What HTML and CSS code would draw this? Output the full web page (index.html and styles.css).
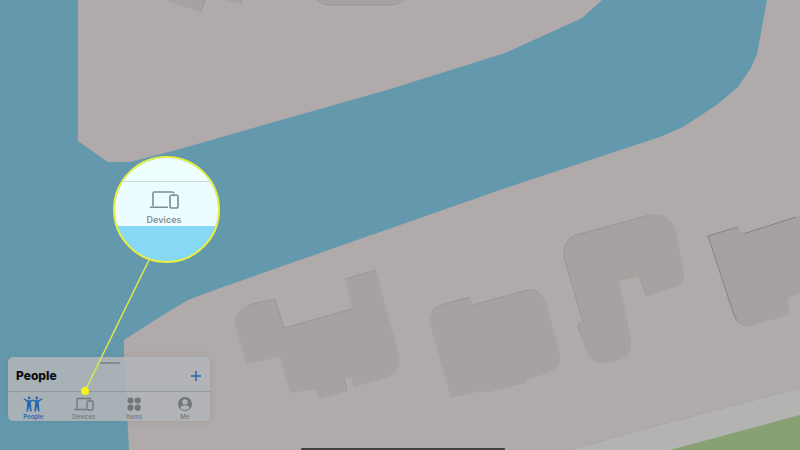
FILE: index.html
```html
<!DOCTYPE html>
<html lang="en">

<head>
    <meta charset="UTF-8">
    <meta name="viewport" content="width=device-width, initial-scale=1.0">
    <title>Find My</title>
    <link rel="stylesheet" href="styles.css">
</head>

<body>
    <svg class="map" viewBox="0 0 800 450" preserveAspectRatio="xMinYMax slice" aria-hidden="true">
        <rect class="water" width="800" height="450" />
        <!-- land -->
        <path class="land" d="M78 0V141L108 162H130L180 149L260 126L387 90L505 53L582 18L602 0Z" />
        <path class="land" d="M767 0L757 54L751 68L738 87L718 104L683 127L660 137L500 190L220 288L188 300L155 320L124 340V356L129 450H800V0Z" />
        <path class="road" d="M570 450L640 430L800 388V450Z" />
        <path class="road-edge" d="M570 450L640 430L800 388" />
        <path class="grass" d="M670 450L800 415V450Z" />
        <!-- buildings -->
        <path class="building" d="M164 0L201 12L205 0ZM224 0L241 4L242 0ZM317 0Q322 5 330 5H391Q400 4 404 0Z" />
        <path class="building" d="M248 305L275 299L284 328L352 309L345 279L376 270L399 356Q402 371 386 378L354 387L351 378L344 378L347 391L319 399L316 389L290 393L280 357L246 364L235 323Q234 310 248 305Z" />
        <path class="building" d="M441 305L470 297L473 305L524 291Q541 287 547 304L560 355Q563 367 548 373L526 380V383L485 393L482 391L451 398L430 324Q427 311 441 305Z" />
        <path class="building" d="M576 235L650 215Q669 212 675 229L684 270Q686 284 676 287L647 296L639 276L619 281L631 340Q633 355 620 360L608 363Q593 366 586 351L578 325L583 322L564 257Q562 241 576 235Z" />
        <path class="building" d="M708 236L738 227L743 234L800 216V293L788 298L789 315L750 326Q741 328 736 320Z" />
        <!-- shaded walls -->
        <path class="wall" d="M201 12L205 0M241 4L242 0M317 0Q322 5 330 5H391Q400 4 404 0" />
        <path class="wall" d="M248 305L275 299L284 328L352 309M345 279L376 270M344 378L347 391" />
        <path class="wall" d="M432 312Q435 307 441 305L470 297M473 305L524 291Q533 289 538 292M583 322L564 257Q562 241 576 235L650 215M583 322L578 325L582 338M639 276L647 296" />
        <path class="wall dark" d="M738 227L708 236L734 315L737 321M743 234L796 217" />
    </svg>

    <main class="screen">
        <section class="panel">
            <div class="grabber"></div>
            <header class="panel-header">
                <h1 class="panel-title">People</h1>
                <button class="add-btn" aria-label="Add person">
                    <svg viewBox="0 0 12 12"><path d="M6 1V11M1 6H11" /></svg>
                </button>
            </header>
            <nav class="tabs">
                <button class="tab active">
                    <svg class="icon" viewBox="0 0 20 16">
                        <circle cx="6.2" cy="2" r="1.4" />
                        <circle cx="13.8" cy="2" r="1.4" />
                        <path d="M1 2.2L4.600 4.200H7.800L10 3.400L12.200 4.200H15.400L19 2.200L19.500 3.200L15.700 5.900L16.500 15.500H15L13.900 10.200L12.800 15.500H11.300L12.200 5.900L10 4.800L7.800 5.900L8.700 15.500H7.200L6.100 10.200L5 15.500H3.500L4.300 5.900L.5 3.200Z" />
                    </svg>
                    <span>People</span>
                </button>
                <button class="tab">
                    <svg class="icon outline" viewBox="0 0 20 16">
                        <path d="M3 12.5V3.5Q3 2.5 4 2.5H15.5Q16.5 2.5 16.8 3.5M.5 13.5H12.5" />
                        <rect x="13" y="5" width="6" height="9" rx="1.3" />
                    </svg>
                    <span>Devices</span>
                </button>
                <button class="tab">
                    <svg class="icon" viewBox="0 0 20 16">
                        <circle cx="6.5" cy="4.5" r="3.1" />
                        <circle cx="13.7" cy="4.5" r="3.1" />
                        <circle cx="6.5" cy="11.7" r="3.1" />
                        <circle cx="13.7" cy="11.7" r="3.1" />
                    </svg>
                    <span>Items</span>
                </button>
                <button class="tab">
                    <svg class="icon" viewBox="0 0 20 16">
                        <circle cx="10" cy="8" r="7" />
                        <circle class="cutout" cx="10" cy="6" r="2.7" />
                        <path class="cutout" d="M5.2 12Q6 9.5 8.6 9.4H11.4Q14 9.5 14.8 12Q12.8 14 10 14T5.2 12Z" />
                    </svg>
                    <span>Me</span>
                </button>
            </nav>
        </section>
    </main>

    <!-- magnified Devices tab -->
    <svg class="pointer" viewBox="0 0 80 140" aria-hidden="true">
        <path d="M69 0L5 131" />
        <circle cx="5" cy="131" r="4" />
    </svg>
    <div class="magnifier">
        <div class="magnifier-top"></div>
        <div class="magnifier-tab">
            <svg class="icon outline" viewBox="0 0 30 20">
                <path d="M4 16V3.5Q4 2 5.5 2H23Q24.5 2 25 3.2M1 17.2H19" />
                <rect x="21" y="5" width="8" height="13" rx="1.8" />
                <path d="M24 5.5H26" />
            </svg>
            <span>Devices</span>
        </div>
    </div>

    <div class="home-indicator"></div>
</body>

</html>
```
FILE: styles.css
```css
* {
    box-sizing: border-box;
}

body {
    margin: 0;
    font-family: Inter, 'Liberation Sans', sans-serif;
    background-color: #6499ad;
    color: #0b0d0f;
    overflow: hidden;
}

.map {
    position: absolute;
    top: 0;
    left: 0;
    width: 100%;
    height: 100%;
}

.water {
    fill: #6499ad;
}

.land {
    fill: #b0abaa;
}

.road {
    fill: #b3b3b1;
}

.road-edge {
    fill: none;
    stroke: #a9a6a4;
}

.grass {
    fill: #87a173;
}

.building {
    fill: #a7a2a1;
}

.wall {
    fill: none;
    stroke: #9b9695;
}

.wall.dark {
    stroke: #858180;
}

.screen {
    display: flex;
    flex-direction: column;
    justify-content: flex-end;
    align-items: flex-start;
    min-height: 100vh;
    padding: 0 8px 29px;
}

.panel {
    position: relative;
    width: 202px;
    border-radius: 5px;
    background-color: rgba(176, 180, 183, 0.88);
    box-shadow: 0 0 8px rgba(70, 80, 80, 0.15);
}

.panel-header {
    display: flex;
    justify-content: space-between;
    align-items: center;
    height: 34px;
    padding: 4px 8px 0;
}

.grabber {
    position: absolute;
    top: 5px;
    left: 50%;
    width: 20px;
    height: 2px;
    margin-left: -9px;
    border-radius: 1px;
    background-color: #85898b;
}

.panel-title {
    margin: 0;
    font-size: 12px;
    line-height: 16px;
    font-weight: 800;
}

.add-btn {
    display: flex;
    padding: 0;
    border: none;
    background: none;
    cursor: pointer;
}

.add-btn svg {
    width: 12px;
    height: 12px;
    stroke: #2668b0;
    stroke-width: 1.5;
}

.tabs {
    display: grid;
    grid-template-columns: repeat(4, 1fr);
    height: 30px;
    padding-top: 4px;
    border-top: 1px solid #949a9d;
}

.tab {
    display: flex;
    flex-direction: column;
    align-items: center;
    padding: 0;
    border: none;
    background: none;
    color: #73777a;
    font-family: inherit;
    font-size: 6px;
    line-height: 10px;
    font-weight: 500;
    cursor: pointer;
}

.tab.active {
    color: #2667b0;
    font-weight: 600;
}

.icon {
    width: 20px;
    height: 16px;
    fill: currentColor;
}

.icon.outline {
    fill: none;
    stroke: currentColor;
    stroke-width: 1.3;
}

.cutout {
    fill: #b0b4b6;
}

.pointer {
    position: absolute;
    left: 80px;
    bottom: 50px;
    width: 80px;
    height: 140px;
    fill: #f4f313;
}

.pointer path {
    fill: none;
    stroke: #dce952;
    stroke-width: 1.5;
}

.magnifier {
    position: absolute;
    left: 113px;
    bottom: 187px;
    width: 107px;
    height: 107px;
    overflow: hidden;
    border: 2px solid #e9ee3f;
    border-radius: 50%;
    background-color: #86d8f4;
}

.magnifier-top {
    height: 24px;
    background-color: #effffe;
    border-bottom: 1px solid #cbd8dc;
}

.magnifier-tab {
    display: flex;
    flex-direction: column;
    align-items: center;
    height: 44px;
    padding: 8px 5px 0 0;
    background-color: #edfcfe;
    color: #879197;
    font-size: 9px;
    line-height: 12px;
    font-weight: 600;
}

.magnifier-tab .icon {
    width: 30px;
    height: 20px;
    margin-bottom: 4px;
    stroke: #7c8b94;
    stroke-width: 1.6;
}

.home-indicator {
    position: absolute;
    bottom: 0;
    left: 50%;
    width: 204px;
    height: 2px;
    margin-left: -99px;
    border-radius: 1px 1px 0 0;
    background-color: #444344;
}
```
